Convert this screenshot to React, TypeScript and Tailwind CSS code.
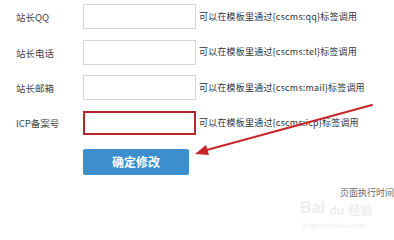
import React from "react";

const rows = [
  { label: "站长QQ", tag: "qq" },
  { label: "站长电话", tag: "tel" },
  { label: "站长邮箱", tag: "mail" },
];

export default function App() {
  const font = { fontFamily: '"Noto Sans CJK SC", "Noto Sans", sans-serif' };
  return (
    <div className="relative w-[394px] h-[240px] bg-white overflow-hidden" style={font}>
      <div className="flex flex-col gap-[10.5px] pt-[4px]">
        {rows.map((r) => (
          <div key={r.tag} className="flex items-center h-[25px]">
            <div className="w-[83px] pl-[16px] text-[9.5px] text-[#444] pt-[2px]">{r.label}</div>
            <div className="w-[113px] h-[25px] border border-[#d6d6d6] bg-white" />
            <div className="ml-[3px] text-[9px] text-[#333] tracking-[0.2px]">
              可以在模板里通过{"{"}cscms:{r.tag}{"}"}标签调用
            </div>
          </div>
        ))}
        <div className="flex items-center h-[24px]">
          <div className="w-[83px] pl-[16px] text-[9.5px] text-[#444] pt-[2px]">ICP备案号</div>
          <div className="w-[113px] h-[24px] border-2 border-[#b3282d] bg-white" />
          <div className="ml-[3px] text-[9px] text-[#333] tracking-[0.2px]">
            可以在模板里通过{"{"}cscms:icp{"}"}标签调用
          </div>
        </div>
      </div>
      <div className="flex pl-[83px] mt-[14px]">
        <div className="w-[106px] h-[26px] rounded-[2px] bg-[#3c8fcc] flex items-center justify-center text-white text-[12px] font-bold">
          确定修改
        </div>
      </div>
      <div className="absolute left-[340px] top-[186px] text-[9px] text-[#666] whitespace-nowrap">页面执行时间</div>
      <div className="absolute left-[300px] top-[200px] flex items-end gap-[4px] text-[#ededed] whitespace-nowrap">
        <span className="text-[16px] font-bold leading-none" style={{ fontFamily: '"Liberation Sans", sans-serif' }}>Bai</span>
        <span className="text-[12px] font-bold leading-none">du</span>
        <span className="text-[12px] font-bold leading-none">经验</span>
      </div>
      <div className="absolute left-[302px] top-[220px] text-[8px] text-[#eeeeee] whitespace-nowrap" style={{ fontFamily: '"Liberation Sans", sans-serif' }}>
        jingyan.baidu.com
      </div>
      <svg className="absolute left-0 top-0" width="394" height="240" viewBox="0 0 394 240">
        <line x1="372" y1="105" x2="203" y2="151" stroke="#c8252b" strokeWidth="2" strokeLinecap="round" />
        <polygon points="195,154 206,145 209,155" fill="#c8252b" />
      </svg>
    </div>
  );
}
